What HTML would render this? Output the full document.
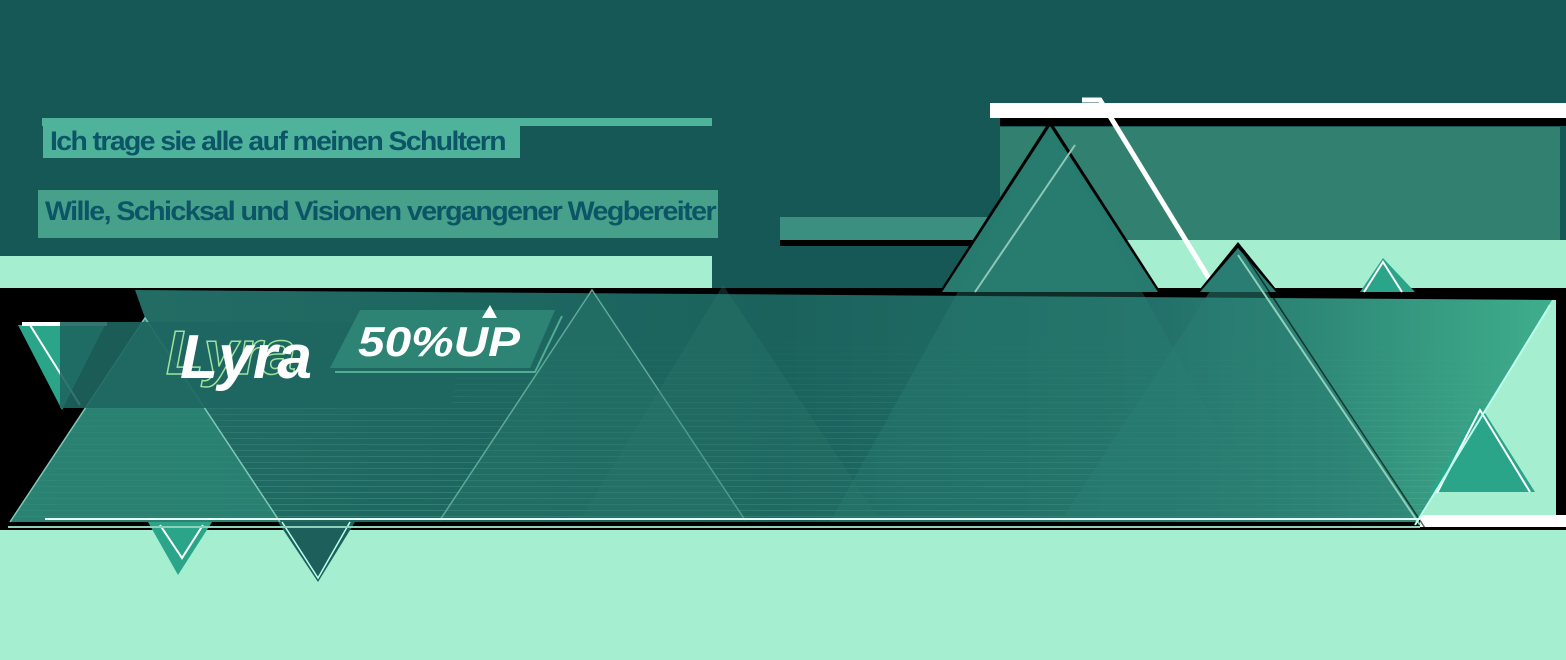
<!DOCTYPE html>
<html><head><meta charset="utf-8"><style>
html,body{margin:0;padding:0;background:#165856;}
svg{display:block}
</style></head><body>
<svg width="1566" height="660" viewBox="0 0 1566 660" xmlns="http://www.w3.org/2000/svg">
<defs>
<linearGradient id="band" x1="0" x2="1" y1="0" y2="0">
<stop offset="0" stop-color="#236e66"/>
<stop offset="0.5" stop-color="#1b625d"/>
<stop offset="0.75" stop-color="#23716a"/>
<stop offset="1" stop-color="#3fae8c"/>
</linearGradient>
<pattern id="lines" width="10" height="6" patternUnits="userSpaceOnUse">
<rect x="0" y="0" width="10" height="1" fill="#5fb3a0" opacity="0.35"/>
</pattern>
<linearGradient id="fade" x1="0" x2="0" y1="0" y2="1">
<stop offset="0" stop-color="#fff" stop-opacity="0"/>
<stop offset="1" stop-color="#fff" stop-opacity="1"/>
</linearGradient>
<mask id="lm"><rect x="0" y="330" width="1566" height="200" fill="url(#fade)"/></mask>
</defs>
<rect width="1566" height="660" fill="#165856"/>
<rect x="990" y="103" width="576" height="15" fill="#ffffff"/>
<rect x="1000" y="118" width="566" height="8" fill="#000"/>
<rect x="1000" y="127" width="560" height="113" fill="#32806f"/>
<rect x="780" y="217" width="230" height="23" fill="#3a8f80"/>
<rect x="780" y="240" width="230" height="6" fill="#000"/>
<rect x="1000" y="240" width="566" height="52" fill="#a6eed0"/>
<rect x="0" y="256" width="712" height="32" fill="#a6eed0"/>
<rect x="0" y="288" width="1566" height="242" fill="#000"/>
<rect x="1420" y="300" width="136" height="215" fill="#a6eed0"/>
<rect x="1420" y="515" width="146" height="12" fill="#fff"/>
<rect x="0" y="530" width="1566" height="130" fill="#a6eed0"/>
<!-- peaks above band -->
<polygon points="938,294 1050,120 1162,294" fill="#000"/>
<polygon points="942,292 1050,126 1158,292" fill="#277a6e"/>
<polyline points="1082,100 1100,100 1210,280" stroke="#ffffff" stroke-width="5" fill="none"/>
<polygon points="1196,294 1238,242 1280,294" fill="#000"/>
<polygon points="1200,292 1238,248 1276,292" fill="#2a7d72"/>
<!-- main band -->
<polygon points="135,290 1552,300 1418,522 10,522 145,318" fill="url(#band)"/>
<polygon points="135,290 1552,300 1418,522 10,522 145,318" fill="url(#lines)" mask="url(#lm)"/>
<polygon points="830,522 1050,126 1270,522" fill="#2a8074" opacity="0.35"/>
<polygon points="1060,522 1238,248 1420,522" fill="#2a7d72" opacity="0.55"/>
<polyline points="975,292 1075,145" stroke="#8cc8b8" stroke-width="2" fill="none"/>
<line x1="1238" y1="255" x2="1420" y2="525" stroke="#8fd0bb" stroke-width="2"/>
<line x1="1245" y1="255" x2="1425" y2="528" stroke="#000" stroke-width="1.5" opacity="0.6"/>
<polygon points="1360,292 1383,258 1415,292" fill="#2aa58a"/>
<polyline points="1364,292 1383,262 1402,292" stroke="#fff" stroke-width="2" fill="none"/>
<polygon points="1430,492 1480,405 1535,492" fill="#2aa58a"/>
<polyline points="1437,493 1480,410 1530,492" stroke="#fff" stroke-width="2" fill="none"/>
<line x1="1415" y1="525" x2="1550" y2="305" stroke="#bfe" stroke-width="2"/>
<polygon points="440,520 592,290 745,520" fill="#2a7a6e" opacity="0.35"/>
<polyline points="440,520 592,290 745,520" stroke="#5fa899" stroke-width="1.5" fill="none"/>
<polygon points="580,520 723,285 880,520" fill="#2a7a6e" opacity="0.3"/>
<polygon points="10,522 145,318 280,522" fill="#2e8a78" opacity="0.7"/>
<polyline points="10,522 145,318 280,522" stroke="#7fc8b5" stroke-width="1.5" fill="none"/>
<polygon points="18,325 105,325 62,410" fill="#2aa58a"/>
<line x1="30" y1="325" x2="80" y2="405" stroke="#fff" stroke-width="2"/>
<rect x="22" y="322" width="85" height="4" fill="#fff"/>
<polygon points="148,522 212,522 178,575" fill="#2aa58a"/>
<polyline points="160,525 182,558 203,525" stroke="#fff" stroke-width="2" fill="none"/>
<polygon points="278,522 355,522 318,582" fill="#1d5f5a"/>
<polyline points="282,522 318,578 350,522" stroke="#bfe" stroke-width="1.5" fill="none"/>
<rect x="45" y="518" width="1375" height="2" fill="#e8fff6"/>
<rect x="8" y="526" width="1412" height="2" fill="#8fd0bb"/>
<polygon points="60,322 470,322 450,408 60,408" fill="#1e6660" opacity="0.9"/>
<polygon points="360,310 555,310 530,368 330,368" fill="#2e8474"/>
<polyline points="335,372 535,372 562,316" stroke="#4fae94" stroke-width="2" fill="none"/>
<rect x="43" y="122" width="477" height="36" fill="#4fb39b"/>
<rect x="42" y="118" width="670" height="8" fill="#4fb39b"/>
<text x="50" y="150" textLength="455" lengthAdjust="spacingAndGlyphs" font-family="Liberation Sans, sans-serif" font-weight="bold" font-size="27" fill="#0b5566" letter-spacing="-1.5">Ich trage sie alle auf meinen Schultern</text>
<rect x="38" y="190" width="680" height="48" fill="#47a08a"/>
<text x="45" y="220" textLength="670" lengthAdjust="spacingAndGlyphs" font-family="Liberation Sans, sans-serif" font-weight="bold" font-size="27" fill="#0b5566" letter-spacing="-1.5">Wille, Schicksal und Visionen vergangener Wegbereiter</text>
<text x="166" y="374" textLength="130" lengthAdjust="spacingAndGlyphs" font-family="Liberation Sans, sans-serif" font-weight="bold" font-style="italic" font-size="62" fill="none" stroke="#9ee29c" stroke-width="1.5">Lyra</text>
<text x="180" y="378" textLength="132" lengthAdjust="spacingAndGlyphs" font-family="Liberation Sans, sans-serif" font-weight="bold" font-style="italic" font-size="62" fill="#ffffff">Lyra</text>
<text x="358" y="356" textLength="162" lengthAdjust="spacingAndGlyphs" font-family="Liberation Sans, sans-serif" font-weight="bold" font-style="italic" font-size="42" fill="#ffffff">50%UP</text>
<polygon points="490,305 482,318 497,318" fill="#fff"/>
</svg>
</body></html>
